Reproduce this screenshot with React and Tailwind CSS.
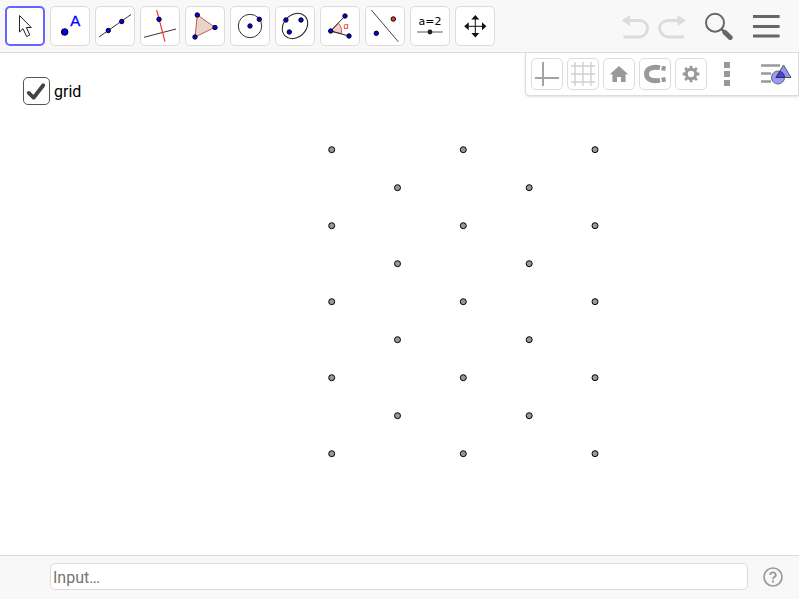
import React, { useState } from 'react';

const Dot = ({ x, y, r = 2.2, fill = '#0000ff' }) => (
    <circle cx={x} cy={y} r={r} fill={fill} stroke="#000" strokeWidth="1" />
);

const TOOLS = [
    {
        name: 'Move',
        icon: <path d="M10.5 5.5V22L14 18.7 17.6 26.5 20.8 25 17.4 17.5H22.3Z" fill="#fff" stroke="#222" />
    },
    {
        name: 'Point',
        icon: (
            <>
                <Dot x={10.7} y={22} r={3.3} />
                <text x="16.2" y="16" fontSize="15" fill="#0000ff" stroke="#0000ff" strokeWidth="0.3" className="font-['Liberation_Sans',sans-serif]">A</text>
            </>
        )
    },
    {
        name: 'Line',
        icon: (
            <>
                <path d="M0 27 32 4.5" stroke="#333" />
                <Dot x={9.3} y={20.5} />
                <Dot x={22.7} y={11.5} />
            </>
        )
    },
    {
        name: 'Perpendicular Line',
        icon: (
            <>
                <path d="M0 27.3 32 19" stroke="#333" />
                <path d="M12.7 0 21 31.7" stroke="#ff3333" strokeWidth="1.2" />
                <Dot x={15} y={9.3} />
            </>
        )
    },
    {
        name: 'Polygon',
        icon: (
            <>
                <path d="M8.3 5 26 17.3 6 27Z" fill="#ebd3cd" stroke="#c0604a" />
                <Dot x={8.3} y={5} />
                <Dot x={26} y={17.5} />
                <Dot x={6} y={27} />
            </>
        )
    },
    {
        name: 'Circle with Center',
        icon: (
            <>
                <circle cx="16" cy="16" r="11.7" stroke="#333" />
                <Dot x={16} y={16} />
                <Dot x={25.3} y={9.3} />
            </>
        )
    },
    {
        name: 'Conic through 5 Points',
        icon: (
            <>
                <ellipse cx="16" cy="16" rx="14" ry="11.2" transform="rotate(-45 16 16)" stroke="#222" />
                <Dot x={6.9} y={10} />
                <Dot x={22} y={10} />
                <Dot x={10.3} y={22} />
            </>
        )
    },
    {
        name: 'Angle',
        icon: (
            <>
                <path d="M6.7 21 14.2 13.3A10.8 10.8 0 0 1 17.2 23.7Z" fill="#f3d0cb" stroke="#dd5555" />
                <path d="M21 6 6.7 21 25 26" stroke="#222" />
                <Dot x={6.7} y={21} />
                <Dot x={21} y={6} />
                <Dot x={25} y={26} />
                <text x="19.5" y="19.3" fontSize="9" fill="#ee2222" className="font-['Liberation_Sans',sans-serif]">α</text>
            </>
        )
    },
    {
        name: 'Reflect about Line',
        icon: (
            <>
                <path d="M2.3 0 29.3 31.7" stroke="#444" />
                <Dot x={7.3} y={23.3} />
                <Dot x={24.3} y={9} fill="#ff3333" />
            </>
        )
    },
    {
        name: 'Slider',
        icon: (
            <>
                <text x="16" y="15" fontSize="11" textAnchor="middle" fill="#000" className="font-['DejaVu_Sans',sans-serif]">a=2</text>
                <path d="M3.3 22H28.7" stroke="#555" />
                <circle cx="16" cy="22" r="2.4" fill="#222" />
            </>
        )
    },
    {
        name: 'Move Graphics View',
        icon: (
            <>
                <path d="M16.3 7V26M7 16.3H26" stroke="#111" />
                <path d="M16.3 5 20.3 9.5H12.3ZM16.3 27.6 12.3 23H20.3ZM5.2 16.3 9.7 12.3V20.3ZM27.4 16.3 23 12.3V20.3Z" fill="#111" />
            </>
        )
    }
];

const STYLE_BUTTONS = [
    {
        name: 'Show or hide the axes',
        icon: <path d="M8 0V24M0 16H24" stroke="#a3a3a3" strokeWidth="2" />
    },
    {
        name: 'Show or hide the grid',
        icon: <path d="M4 0V24M12 0V24M20 0V24M0 4H24M0 12H24M0 20H24" stroke="#d0d0d0" strokeWidth="1.4" />
    },
    {
        name: 'Back to default view',
        icon: <path d="M12 4 21.2 12.2H18.6V20H14V15H10V20H5.4V12.2H2.8Z" fill="#999" />
    },
    {
        name: 'Point capturing',
        icon: (
            <>
                <path d="M17 5.6C12 4.8 3.5 4.8 3.5 12S12 19.2 17 18.4" stroke="#999" strokeWidth="5" />
                <path d="M18.6 6 22.6 6.8M18.6 18 22.6 17.2" stroke="#999" strokeWidth="4.6" />
            </>
        )
    },
    {
        name: 'Settings',
        icon: (
            <>
                <circle cx="12" cy="12" r="4.7" stroke="#999" strokeWidth="3" />
                <path d="M12 3.7V7M12 17V20.3M3.7 12H7M17 12H20.3M6.1 6.1 8.5 8.5M15.5 15.5 17.9 17.9M6.1 17.9 8.5 15.5M15.5 8.5 17.9 6.1" stroke="#999" strokeWidth="2.8" />
            </>
        )
    }
];

// Hexagonal lattice: full columns and the shifted ones between them
const LATTICE = [
    { x: 331.7, ys: [96.7, 172.7, 248.7, 324.7, 400.7] },
    { x: 397.5, ys: [134.7, 210.7, 286.7, 362.7] },
    { x: 463.3, ys: [96.7, 172.7, 248.7, 324.7, 400.7] },
    { x: 529.2, ys: [134.7, 210.7, 286.7, 362.7] },
    { x: 595, ys: [96.7, 172.7, 248.7, 324.7, 400.7] }
];

const Toolbar = ({ selected, onSelect }) => (
    <header className="flex items-center justify-between border-b border-[#dcdcdc] bg-[#f8f8f8] pt-1.5 pr-[19px] pb-1.5 pl-[5px]">
        <div className="flex gap-[5px]">
            {TOOLS.map(tool => (
                <button
                    key={tool.name}
                    type="button"
                    aria-label={tool.name}
                    onClick={() => onSelect(tool.name)}
                    className={`flex size-10 items-center justify-center rounded-[5px] bg-white ${
                        selected === tool.name ? 'border-2 border-[#6666ff]' : 'border border-[#dcdcdc]'
                    }`}
                >
                    <svg viewBox="0 0 32 32" fill="none" className="size-8 shrink-0">{tool.icon}</svg>
                </button>
            ))}
        </div>
        <div className="flex items-center gap-[19px]">
            <div className="flex gap-2">
                <button type="button" aria-label="Undo">
                    <svg viewBox="0 0 28 28" fill="none" className="size-7">
                        <path d="M7 8.5H17.5C22.5 8.5 25.5 12 25.5 16S22.5 25 17.5 25H1.5" stroke="#dcdcdc" strokeWidth="2.8" />
                        <path d="M-0.5 8.5 8 3V14Z" fill="#dcdcdc" />
                    </svg>
                </button>
                <button type="button" aria-label="Redo">
                    <svg viewBox="0 0 28 28" fill="none" className="size-7">
                        <path d="M20 8.5H10.5C5.5 8.5 1.5 12 1.5 16S5.5 25 10.5 25H26" stroke="#dcdcdc" strokeWidth="2.8" />
                        <path d="M28 8.5 19.5 3V14Z" fill="#dcdcdc" />
                    </svg>
                </button>
            </div>
            <button type="button" aria-label="Search">
                <svg viewBox="0 0 28 28" fill="none" className="size-7">
                    <circle cx="10" cy="10.7" r="9" stroke="#666" strokeWidth="2" />
                    <path d="M16.5 17.2 20 20.7" stroke="#666" strokeWidth="2.4" />
                    <path d="M20 20.5 25.2 25.5" stroke="#666" strokeWidth="5" strokeLinecap="round" />
                </svg>
            </button>
            <button type="button" aria-label="Menu">
                <svg viewBox="0 0 28 28" fill="none" className="size-7">
                    <path d="M1 4.6H27.6M1 14.5H27.6M1 24H27.6" stroke="#666" strokeWidth="3" />
                </svg>
            </button>
        </div>
    </header>
);

const StyleBar = () => (
    <div className="absolute top-0 right-0 flex gap-1 rounded-bl-[5px] border-r border-b border-l border-[#dcdcdc] bg-white py-[5px] pr-1.5 pl-[5px] shadow-sm">
        {STYLE_BUTTONS.map(btn => (
            <button
                key={btn.name}
                type="button"
                aria-label={btn.name}
                className="flex size-8 items-center justify-center rounded-[5px] border border-[#dcdcdc] bg-white"
            >
                <svg viewBox="0 0 24 24" fill="none" className="size-6 shrink-0">{btn.icon}</svg>
            </button>
        ))}
        <button type="button" aria-label="More" className="flex size-8 items-center justify-center">
            <svg viewBox="0 0 24 24" className="size-6">
                <path d="M9 0H15V6H9ZM9 9H15V15H9ZM9 18H15V24H9Z" fill="#999" />
            </svg>
        </button>
        <button type="button" aria-label="Toggle style bar" className="ml-[13px] flex size-8 items-center justify-center">
            <svg viewBox="0 0 32 32" fill="none" className="size-8">
                <path d="M1 7.5H20M1 15.5H11M1 23.5H11" stroke="#999" strokeWidth="2.4" />
                <circle cx="18" cy="19.5" r="6.5" fill="#9999ff" stroke="#666" />
                <path d="M23.5 7 31 19.5H16Z" fill="#8888ff" fillOpacity="0.9" stroke="#555" />
                <path d="M16 19.5 20 13.4A6.5 6.5 0 0 1 24.5 19.5Z" fill="#4444ee" stroke="#333" />
            </svg>
        </button>
    </div>
);

const GraphicsView = () => {
    const [showGrid, setShowGrid] = useState(true);

    return (
        <main className="relative flex-1 overflow-hidden bg-white">
            {showGrid && (
                <svg className="absolute inset-0 size-full" fill="#999" stroke="#000">
                    {LATTICE.map(col => col.ys.map(y => (
                        <circle key={`${col.x}-${y}`} cx={col.x} cy={y} r="3" />
                    )))}
                </svg>
            )}
            <label className="relative mt-6 ml-[23px] inline-flex items-center gap-1 text-base text-black">
                <span className="relative h-7 w-[27px]">
                    <input
                        type="checkbox"
                        checked={showGrid}
                        onChange={e => setShowGrid(e.target.checked)}
                        className="peer block h-7 w-[27px] appearance-none rounded-[5px] border border-[#555] bg-white"
                    />
                    <svg viewBox="0 0 28 28" fill="none" className="pointer-events-none absolute inset-0 hidden h-7 w-[27px] peer-checked:block">
                        <path d="M6 16 11 21 21 8" stroke="#444" strokeWidth="4" strokeLinecap="round" strokeLinejoin="round" />
                    </svg>
                </span>
                <span className="pt-0.5">grid</span>
            </label>
            <StyleBar />
        </main>
    );
};

const InputBar = () => {
    const [value, setValue] = useState('');

    return (
        <footer className="flex items-center gap-[15px] border-t border-[#dcdcdc] bg-[#f8f8f8] pt-[7px] pr-4 pb-[9px] pl-[50px]">
            <input
                type="text"
                aria-label="Input"
                placeholder="Input…"
                value={value}
                onChange={e => setValue(e.target.value)}
                className="h-[27px] min-w-0 flex-1 rounded-[5px] border border-[#dcdcdc] bg-white px-0.5 pt-0.5 text-base text-black outline-none placeholder:text-[#757575]"
            />
            <button type="button" aria-label="Help">
                <svg viewBox="0 0 20 20" fill="none" className="size-5">
                    <circle cx="10" cy="10" r="9" stroke="#999" strokeWidth="1.7" />
                    <path d="M7.3 8A2.7 2.5 0 1 1 11.4 10Q10 10.8 10 12.2" stroke="#999" strokeWidth="1.9" />
                    <path d="M9 13.5H11V15.5H9Z" fill="#999" />
                </svg>
            </button>
        </footer>
    );
};

const App = () => {
    const [tool, setTool] = useState('Move');

    return (
        <div className="flex min-h-screen flex-col bg-white pr-px pb-px font-[Roboto,sans-serif]">
            <Toolbar selected={tool} onSelect={setTool} />
            <GraphicsView />
            <InputBar />
        </div>
    );
};

export default App;
